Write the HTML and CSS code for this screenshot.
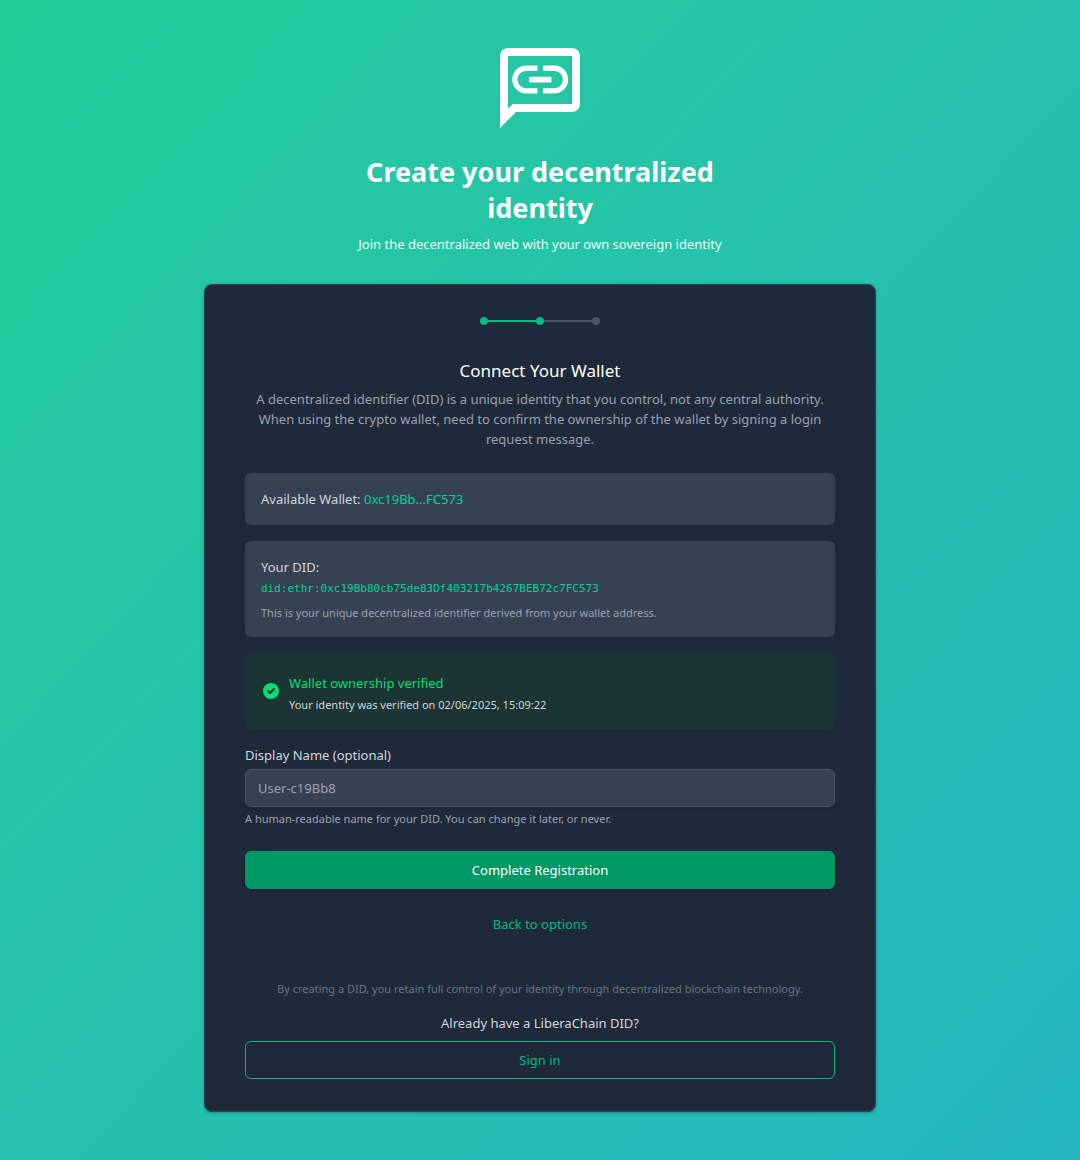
FILE: index.html
```html
<!DOCTYPE html>
<html lang="en">
<head>
  <meta charset="utf-8">
  <meta name="viewport" content="width=device-width, initial-scale=1">
  <title>LiberaChain – Create your decentralized identity</title>
  <link rel="stylesheet" href="styles.css">
</head>
<body>
  <main class="page">
    <header class="intro">
      <svg class="logo" viewBox="2 2 20 20" fill="currentColor" aria-hidden="true">
        <path d="M20 2H4c-1.1 0-2 .9-2 2v18l4-4h14c1.1 0 2-.9 2-2V4c0-1.1-.9-2-2-2zm0 14H5.17L4 17.17V4h16v12z"/>
        <path transform="translate(3.65 1.5) scale(.7)" d="M3.9 12c0-1.71 1.39-3.1 3.1-3.1h4V7H7c-2.76 0-5 2.24-5 5s2.24 5 5 5h4v-1.9H7c-1.71 0-3.1-1.39-3.1-3.1zM8 13h8v-2H8v2zm9-6h-4v1.9h4c1.71 0 3.1 1.39 3.1 3.1s-1.39 3.1-3.1 3.1h-4V17h4c2.76 0 5-2.24 5-5s-2.24-5-5-5z"/>
      </svg>
      <h1 class="intro-title">Create your decentralized identity</h1>
      <p class="intro-text">Join the decentralized web with your own sovereign identity</p>
    </header>

    <section class="card">
      <div class="steps" role="img" aria-label="Step 2 of 3">
        <span class="dot done"></span>
        <span class="line done"></span>
        <span class="dot done"></span>
        <span class="line"></span>
        <span class="dot"></span>
      </div>

      <h2 class="card-title">Connect Your Wallet</h2>
      <p class="card-text">A decentralized identifier (DID) is a unique identity that you control, not any central authority. When using the crypto wallet, need to confirm the ownership of the wallet by signing a login request message.</p>

      <form class="form">
        <div class="panel">
          <p>Available Wallet: <span class="address">0xc19Bb...FC573</span></p>
        </div>

        <div class="panel">
          <p>Your DID:</p>
          <p class="did">did:ethr:0xc19Bb80cb75de83Df403217b4267BEB72c7FC573</p>
          <p class="note">This is your unique decentralized identifier derived from your wallet address.</p>
        </div>

        <div class="verified">
          <svg class="check" viewBox="0 0 20 20" fill="currentColor" aria-hidden="true">
            <path fill-rule="evenodd" clip-rule="evenodd" d="M10 18a8 8 0 100-16 8 8 0 000 16zm3.707-9.293a1 1 0 00-1.414-1.414L9 10.586 7.707 9.293a1 1 0 00-1.414 1.414l2 2a1 1 0 001.414 0l4-4z"/>
          </svg>
          <div class="verified-body">
            <p class="verified-title">Wallet ownership verified</p>
            <p class="verified-time">Your identity was verified on 02/06/2025, 15:09:22</p>
          </div>
        </div>

        <div class="field">
          <label for="display-name">Display Name (optional)</label>
          <input id="display-name" type="text" placeholder="User-c19Bb8">
          <p class="hint">A human-readable name for your DID. You can change it later, or never.</p>
        </div>

        <button class="button primary" type="submit">Complete Registration</button>
        <button class="button plain" type="button">Back to options</button>
      </form>

      <footer class="card-footer">
        <p class="legal">By creating a DID, you retain full control of your identity through decentralized blockchain technology.</p>
        <p class="question">Already have a LiberaChain DID?</p>
        <a class="button outline" href="#sign-in">Sign in</a>
      </footer>
    </section>
  </main>
</body>
</html>
```

FILE: styles.css
```css
* {
  box-sizing: border-box;
  margin: 0;
}

body {
  font: 13px/20px "Noto Sans", sans-serif;
  color: #d1d5dc;
}

.page {
  min-height: 100vh;
  padding: 48px 32px;
  display: flex;
  flex-direction: column;
  align-items: center;
  gap: 30px;
  background: linear-gradient(to bottom right, #24cc99, #24b7c0);
}

.intro {
  width: 100%;
  max-width: 448px;
  display: flex;
  flex-direction: column;
  align-items: center;
  text-align: center;
  color: #fff;
}

.logo {
  width: 80px;
  height: 80px;
}

.intro-title {
  margin: 26px 0 8px;
  padding: 0 32px;
  font-size: 27px;
  line-height: 36px;
  font-weight: 700;
}

.intro-text {
  color: #ecfdf5;
}

.card {
  width: 100%;
  max-width: 672px;
  padding: 32px 40px;
  border: 1px solid #364153;
  border-radius: 8px;
  background: #1e2939;
  box-shadow: 0 1px 3px rgb(0 0 0 / 30%);
}

.steps {
  display: flex;
  align-items: center;
  justify-content: center;
}

.dot {
  width: 8px;
  height: 8px;
  border-radius: 50%;
  background: #4a5565;
}

.line {
  width: 48px;
  height: 2px;
  background: #4a5565;
}

.done {
  background: #00bc7d;
}

.card-title {
  margin-top: 32px;
  font-size: 17px;
  line-height: 28px;
  font-weight: 400;
  text-align: center;
  color: #fff;
}

.card-text {
  margin-top: 4px;
  text-align: center;
  color: #99a1af;
}

.form {
  margin-top: 24px;
  display: flex;
  flex-direction: column;
  gap: 16px;
}

.panel {
  padding: 16px;
  border-radius: 6px;
  background: #364153;
}

.address {
  color: #00d492;
}

.did {
  margin-top: 4px;
  font: 11px/16px "DejaVu Sans Mono", monospace;
  color: #00d492;
  overflow-wrap: anywhere;
}

.note,
.hint,
.legal,
.verified-time {
  font-size: 11px;
  line-height: 16px;
}

.note {
  margin-top: 8px;
  color: #99a1af;
}

.verified {
  display: flex;
  align-items: center;
  gap: 8px;
  padding: 16px;
  border-radius: 6px;
  background: #1b3434;
}

.check {
  flex: none;
  width: 20px;
  height: 20px;
  color: #05df72;
}

.verified-body {
  padding-top: 4px;
}

.verified-title {
  color: #05df72;
}

.verified-time {
  margin-top: 4px;
}

.field {
  display: flex;
  flex-direction: column;
  gap: 4px;
}

.field input {
  width: 100%;
  height: 38px;
  padding: 8px 12px;
  border: 1px solid #4a5565;
  border-radius: 6px;
  background: #364153;
  box-shadow: 0 1px 2px rgb(0 0 0 / 20%);
  font: inherit;
  color: #fff;
}

.field input::placeholder {
  color: #99a1af;
}

.hint {
  color: #99a1af;
}

.button {
  display: block;
  width: 100%;
  padding: 8px 16px;
  border: 1px solid transparent;
  border-radius: 6px;
  background: none;
  font: inherit;
  text-align: center;
  text-decoration: none;
  color: #00bc7d;
  cursor: pointer;
}

.primary {
  margin-top: 8px;
  border-color: #009966;
  background: #009966;
  color: #fff;
  box-shadow: 0 1px 3px rgb(0 0 0 / 20%);
}

.outline {
  margin-top: 8px;
  border-color: #00bc7d;
}

.card-footer {
  margin-top: 38px;
  text-align: center;
}

.legal {
  color: #6a7282;
}

.question {
  margin-top: 16px;
}
```
